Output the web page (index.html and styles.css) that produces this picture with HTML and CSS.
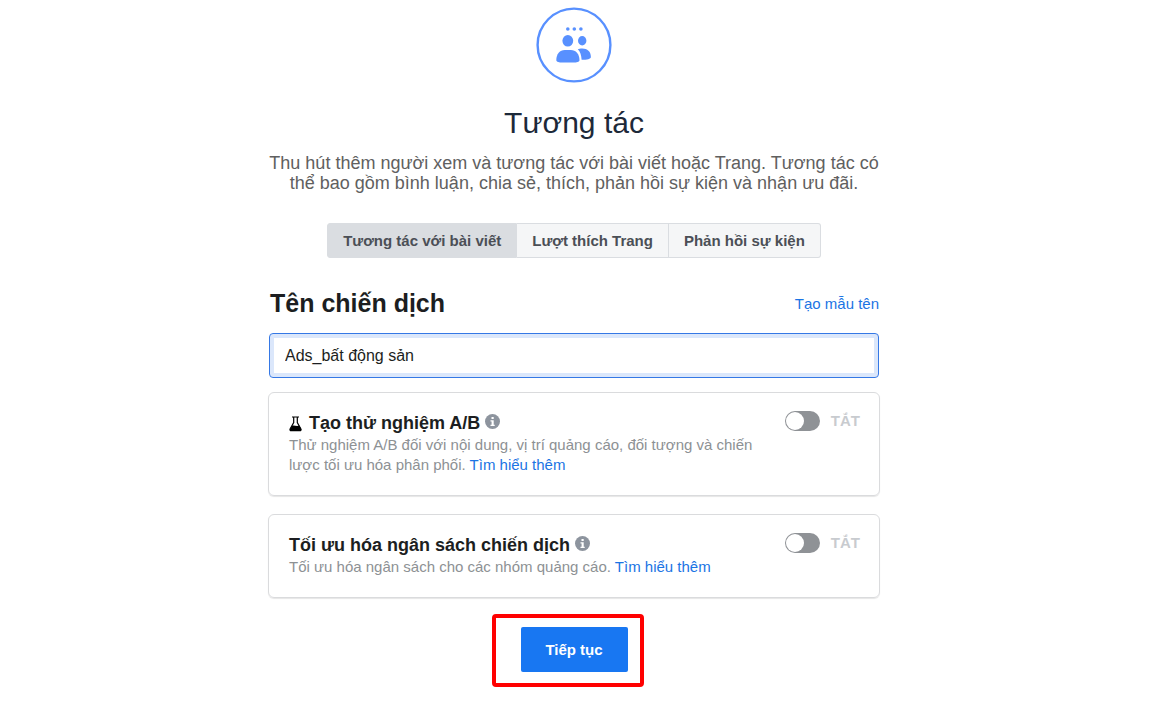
FILE: index.html
```
<!DOCTYPE html>
<html lang="vi">

<head>
	<title>Tương tác</title>
	<meta charset="utf-8" />
	<link rel="stylesheet" href="styles.css">
</head>

<body>
	<main class="campaign">
		<header class="objective">
			<svg class="objective-icon" width="76" height="76" viewBox="0 0 76 76" aria-hidden="true">
				<circle cx="38" cy="38" r="36.4" fill="none" stroke="#5890ff" stroke-width="2.4" />
				<circle cx="31.8" cy="22" r="1.8" />
				<circle cx="38.3" cy="22" r="1.8" />
				<circle cx="44.9" cy="22" r="1.8" />
				<ellipse cx="31.8" cy="33.8" rx="5.4" ry="5.8" />
				<ellipse cx="46.2" cy="33.8" rx="4.2" ry="4.7" />
				<path d="M20.300 53.200c0-6.200 3.500-10.200 8.500-10.200h6c5 0 8.700 4 8.700 10.200 0 1.600-3 2.300-6 2.300H26.300c-3 0-6-.7-6-2.300z" />
				<path d="M41.800 42.200c1.200-.5 2.500-.7 4.500-.7 5 0 8.600 3 8.600 8.400 0 2-3.800 2.900-9.300 2.900-.2-4.500-1.300-8-3.800-10.600z" />
			</svg>
			<h1>Tương tác</h1>
			<p>Thu hút thêm người xem và tương tác với bài viết hoặc Trang. Tương tác có thể bao gồm bình luận, chia sẻ, thích, phản hồi sự kiện và nhận ưu đãi.</p>
		</header>

		<div class="tabs">
			<button type="button" class="active">Tương tác với bài viết</button>
			<button type="button">Lượt thích Trang</button>
			<button type="button">Phản hồi sự kiện</button>
		</div>

		<form id="frmCampaign">
			<div class="name-row">
				<label for="inpName">Tên chiến dịch</label>
				<a href="#">Tạo mẫu tên</a>
			</div>
			<input type="text" id="inpName" value="Ads_bất động sản">

			<section class="card">
				<div class="card-text">
					<h3>
						<svg class="flask" width="14" height="16" viewBox="0 0 14 16" aria-hidden="true">
							<path d="M3 1h7M4.700 1v5.500L1.200 12.700c-.6 1.200 0 2 1 2h8.600c1 0 1.600-.8 1-2L8.300 6.500V1" fill="none" stroke="#000" stroke-width="1.200" />
							<path d="M3 9.800c2.500-.8 4.500 1 7.200-.2l2 3.600c.3.900-.3 1.900-1.400 1.900H2.200c-1.100 0-1.600-1-1.200-1.900z" />
						</svg>
						Tạo thử nghiệm A/B
						<svg class="info" width="15" height="15" viewBox="0 0 15 15" aria-hidden="true">
							<circle cx="7.500" cy="7.500" r="7.500" fill="#8d949e" />
							<path d="M6.500 3h2.200v2H6.500zM5.500 6.200h3.200v4.600h1V12H5.500v-1.200h1.100V7.400H5.500z" fill="#fff" />
						</svg>
					</h3>
					<p>Thử nghiệm A/B đối với nội dung, vị trí quảng cáo, đối tượng và chiến lược tối ưu hóa phân phối. <a href="#">Tìm hiểu thêm</a></p>
				</div>
				<label class="switch"><input type="checkbox" id="chkTest"> TẮT</label>
			</section>

			<section class="card">
				<div class="card-text">
					<h3>
						Tối ưu hóa ngân sách chiến dịch
						<svg class="info" width="15" height="15" viewBox="0 0 15 15" aria-hidden="true">
							<circle cx="7.500" cy="7.500" r="7.500" fill="#8d949e" />
							<path d="M6.500 3h2.200v2H6.500zM5.500 6.200h3.200v4.600h1V12H5.500v-1.200h1.100V7.400H5.500z" fill="#fff" />
						</svg>
					</h3>
					<p>Tối ưu hóa ngân sách cho các nhóm quảng cáo. <a href="#">Tìm hiểu thêm</a></p>
				</div>
				<label class="switch"><input type="checkbox" id="chkBudget"> TẮT</label>
			</section>

			<div class="actions">
				<button type="submit" id="btnNext">Tiếp tục</button>
				<span class="highlight"></span>
			</div>
		</form>
	</main>
</body>

</html>
```
FILE: styles.css
```
/* general styles */
* {
	box-sizing: border-box;
}

body {
	margin: 0;
	padding: 7px 13px 20px 0;
	background-color: #fff;
	color: #1c1e21;
	font-family: "Liberation Sans", Arial, sans-serif;
	font-size: 15px;
}

h1,
h3,
p {
	margin: 0;
}

a {
	color: #1b74e4;
	text-decoration: none;
}

button,
input {
	font-family: inherit;
}

button {
	cursor: pointer;
}

/* objective */
.campaign {
	max-width: 612px;
	margin: 0 auto;
}

.objective {
	text-align: center;
}

.objective-icon {
	display: block;
	margin: 0 auto 22px;
	fill: #5890ff;
}

.objective h1 {
	color: #1d2939;
	font-size: 30px;
	font-weight: normal;
	line-height: 36px;
}

.objective p {
	margin-top: 12px;
	color: #606060;
	font-size: 18px;
	line-height: 20px;
}

.tabs {
	display: flex;
	justify-content: center;
	margin-top: 30px;
}

.tabs button {
	height: 35px;
	padding: 0 15px;
	border: 1px solid #dadde1;
	border-left-width: 0;
	background-color: #f5f6f7;
	color: #4b4f56;
	font-size: 15px;
	font-weight: bold;
}

.tabs button:first-child {
	border-left-width: 1px;
	border-radius: 3px 0 0 3px;
}

.tabs button:last-child {
	border-radius: 0 3px 3px 0;
}

.tabs .active {
	background-color: #dadde1;
}

/* campaign name */
.name-row {
	display: flex;
	justify-content: space-between;
	align-items: center;
	margin: 30px 1px 15px 2px;
}

.name-row label {
	font-size: 25px;
	font-weight: bold;
	line-height: 30px;
}

#inpName {
	display: block;
	width: calc(100% - 2px);
	height: 45px;
	margin: 0 1px 14px;
	padding: 0 15px;
	border: 1px solid #3578e5;
	border-radius: 4px;
	box-shadow: inset 0 0 0 4px #dbe7fb;
	color: #1c1e21;
	font-size: 16px;
	outline: none;
}

/* cards */
.card {
	display: flex;
	justify-content: space-between;
	align-items: flex-start;
	margin-bottom: 18px;
	padding: 18px 19px 20px 20px;
	border: 1px solid #dadbdd;
	border-radius: 6px;
	box-shadow: 0 1px 1px rgba(0, 0, 0, .1);
}

.card-text {
	max-width: 480px;
}

.card h3 {
	display: flex;
	align-items: center;
	gap: 5px;
	font-size: 18px;
	line-height: 24px;
}

.card p {
	color: #8d9194;
	font-size: 15px;
	line-height: 20px;
}

.flask {
	margin: 2px 1px 0 0;
}

.info {
	margin-bottom: 4px;
}

.switch {
	display: flex;
	align-items: center;
	gap: 11px;
	color: #c8cbcf;
	font-weight: bold;
	line-height: 20px;
}

.switch input {
	appearance: none;
	width: 35px;
	height: 20px;
	margin: 0;
	padding: 1px;
	border-radius: 10px;
	background-color: #8f9296;
	cursor: pointer;
}

.switch input::before {
	content: "";
	display: block;
	width: 18px;
	height: 18px;
	border-radius: 50%;
	background-color: #fff;
}

.switch input:checked::before {
	margin-left: auto;
}

/* submit */
.actions {
	position: relative;
	width: 107px;
	margin: 29px auto 0;
}

#btnNext {
	width: 100%;
	height: 45px;
	border: 0;
	border-radius: 2px;
	background-color: #1877f2;
	color: #fff;
	font-size: 15px;
	font-weight: bold;
}

.highlight {
	position: absolute;
	inset: -13px -16px -15px -29px;
	border: 4px solid #f00;
	border-radius: 4px;
	pointer-events: none;
}
```
